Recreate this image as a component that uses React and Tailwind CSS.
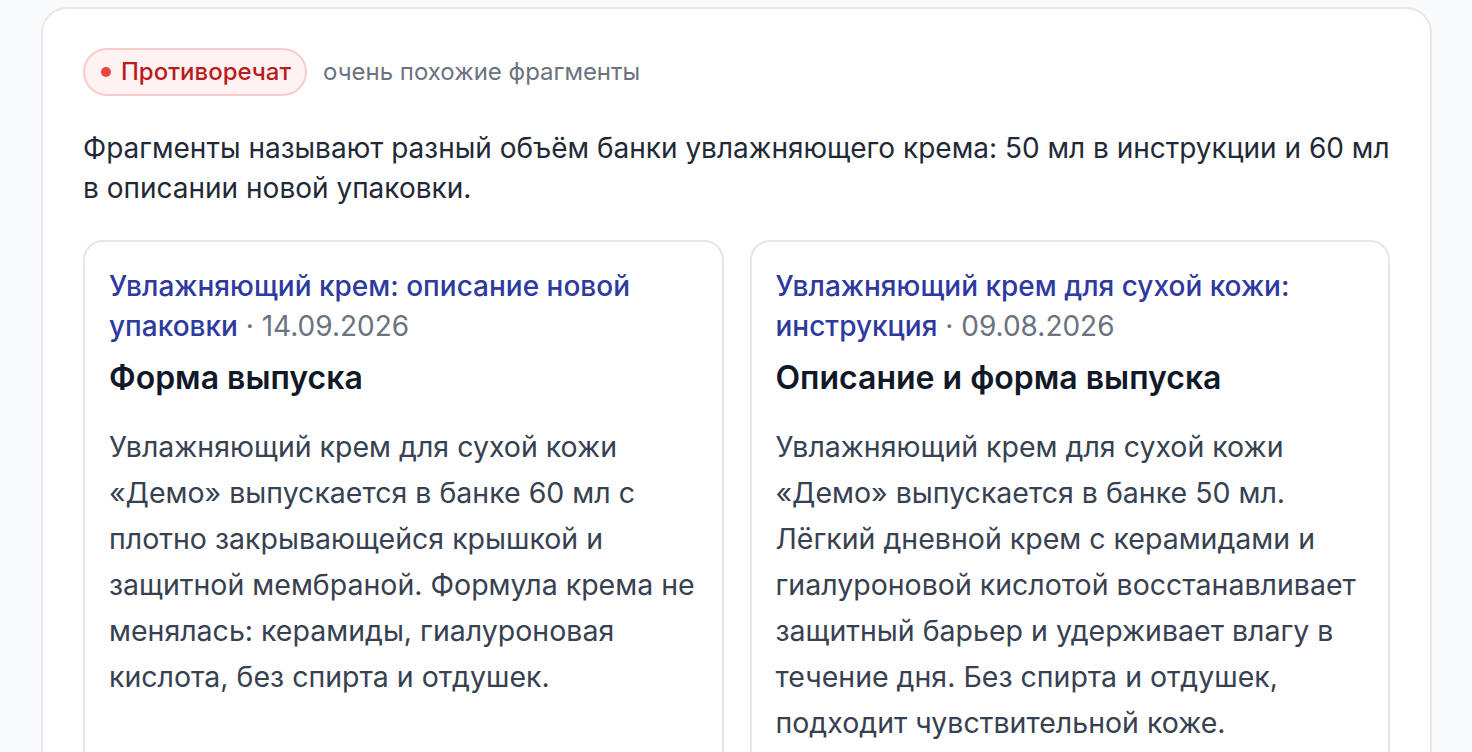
export default function App() {
  const cards = [
    {
      source: "Увлажняющий крем: описание новой упаковки",
      date: "14.09.2026",
      heading: "Форма выпуска",
      body:
        "Увлажняющий крем для сухой кожи «Демо» выпускается в банке 60 мл с плотно закрывающейся крышкой и защитной мембраной. Формула крема не менялась: керамиды, гиалуроновая кислота, без спирта и отдушек.",
    },
    {
      source: "Увлажняющий крем для сухой кожи: инструкция",
      date: "09.08.2026",
      heading: "Описание и форма выпуска",
      body:
        "Увлажняющий крем для сухой кожи «Демо» выпускается в банке 50 мл. Лёгкий дневной крем с керамидами и гиалуроновой кислотой восстанавливает защитный барьер и удерживает влагу в течение дня. Без спирта и отдушек, подходит чувствительной коже.",
    },
  ];
  return (
    <div
      className="min-h-screen bg-[#f9fafb] px-[41px] pt-[7px]"
      style={{ fontFamily: "Inter, 'Noto Sans', sans-serif" }}
    >
      <div className="w-[1391px] rounded-[26px] border-2 border-[#e5e7eb] bg-white px-[40px] pt-[39px] pb-[40px] min-h-[800px]">
        <div className="flex items-center gap-[16px]">
          <span className="flex h-[48px] items-center gap-[10px] rounded-full border-2 border-[#fecaca] bg-[#fef2f2] pl-[16px] pr-[14px] text-[24px] font-medium text-[#b91c1c]">
            <span className="h-[10px] w-[10px] rounded-full bg-[#ef4444]" />
            Противоречат
          </span>
          <span className="text-[24px] text-[#6b7280]">очень похожие фрагменты</span>
        </div>
        <p className="mt-[32px] text-[28px] leading-[40px] text-[#1f2937]">
          Фрагменты называют разный объём банки увлажняющего крема: 50 мл в инструкции и 60 мл в описании новой упаковки.
        </p>
        <div className="mt-[32px] grid grid-cols-2 gap-[26px]">
          {cards.map((c, i) => (
            <div
              key={i}
              className="min-h-[560px] rounded-[20px] border-2 border-[#e5e7eb] bg-white pl-[24px] pr-[12px] pt-[24px]"
            >
              <div className="pr-[12px] text-[28px] leading-[40px]">
                <span className="font-medium text-[#2e3a9e]">{c.source}</span>
                <span className="text-[#6b7280]"> · {c.date}</span>
              </div>
              <h3 className="mt-[12px] text-[32px] leading-[40px] font-semibold text-[#111827]">
                {c.heading}
              </h3>
              <p className="mt-[26px] text-[28.5px] leading-[46px] text-[#374151]">{c.body}</p>
            </div>
          ))}
        </div>
      </div>
    </div>
  );
}
